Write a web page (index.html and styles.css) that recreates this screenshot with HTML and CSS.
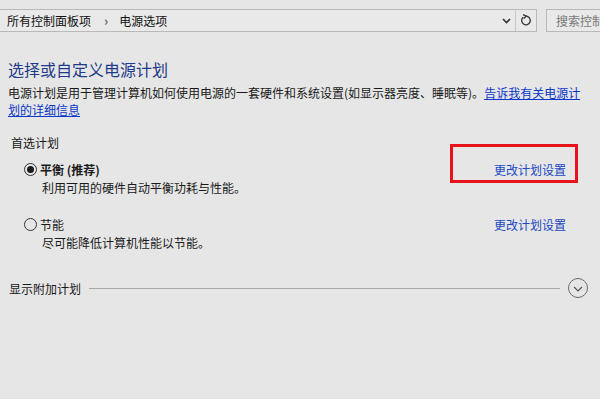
FILE: index.html
```html
<!DOCTYPE html>
<html lang="zh-CN">
<head>
    <meta charset="UTF-8">
    <title>电源选项</title>
    <link rel="stylesheet" href="styles.css">
</head>
<body>
    <div class="toolbar">
        <div class="address">
            <span class="crumb">所有控制面板项</span>
            <span class="sep">›</span>
            <span class="crumb">电源选项</span>
            <span class="spacer"></span>
            <span class="drop">
                <svg width="9" height="6" viewBox="0 0 9 6"><path d="M1 1 L4.5 4.5 L8 1" fill="none" stroke="#333" stroke-width="1.6"/></svg>
            </span>
            <span class="refresh">
                <svg width="12" height="13" viewBox="0 0 12 13"><path d="M3.2 3.2 A4.3 4.3 0 1 0 6 2.2" fill="none" stroke="#333" stroke-width="1.3"/><path d="M3 0.6 L6.4 2.2 L3.6 4.6" fill="none" stroke="#333" stroke-width="1.3"/></svg>
            </span>
        </div>
        <div class="search">搜索控制面板</div>
    </div>

    <div class="content">
        <h1 class="title">选择或自定义电源计划</h1>
        <p class="intro">电源计划是用于管理计算机如何使用电源的一套硬件和系统设置(如显示器亮度、睡眠等)。<a href="#" class="link">告诉我有关电源计划的详细信息</a></p>

        <div class="group-title">首选计划</div>

        <div class="plan">
            <div class="plan-head">
                <span class="radio checked"></span>
                <span class="plan-name bold">平衡 (推荐)</span>
                <a href="#" class="plan-link">更改计划设置</a>
                <span class="highlight"></span>
            </div>
            <div class="plan-desc">利用可用的硬件自动平衡功耗与性能。</div>
        </div>

        <div class="plan">
            <div class="plan-head">
                <span class="radio"></span>
                <span class="plan-name">节能</span>
                <a href="#" class="plan-link">更改计划设置</a>
            </div>
            <div class="plan-desc">尽可能降低计算机性能以节能。</div>
        </div>

        <div class="more">
            <span>显示附加计划</span>
            <span class="rule"></span>
            <span class="expand">
                <svg width="10" height="6" viewBox="0 0 10 6"><path d="M1 1 L5 5 L9 1" fill="none" stroke="#555" stroke-width="1.2"/></svg>
            </span>
        </div>
    </div>
</body>
</html>
```

FILE: styles.css
```css
* {
    font-family: "Noto Sans CJK SC", "Liberation Sans", sans-serif;
    box-sizing: border-box;
}

body {
    margin: 0;
    background-color: #e6e6e6;
    color: #1a1a1a;
    font-size: 12px;
    overflow: hidden;
}

.toolbar {
    display: flex;
    gap: 9px;
    padding-top: 9px;
    height: 32px;
}

.address {
    flex: 1;
    margin-left: -1px;
    display: flex;
    align-items: center;
    border: 1px solid #b9b9b9;
    background: #e9e9e9;
    height: 23px;
    padding-left: 7px;
    font-size: 12px;
}

.crumb {
    color: #111;
    line-height: 21px;
}

.sep {
    color: #666;
    font-size: 13px;
    font-weight: bold;
    margin: 0 11px 0 13px;
}

.spacer {
    flex: 1;
}

.drop {
    width: 18px;
    display: flex;
    justify-content: center;
    align-items: center;
    height: 100%;
}

.refresh {
    width: 21px;
    height: 100%;
    border-left: 1px solid #c8c8c8;
    display: flex;
    justify-content: center;
    align-items: center;
}

.search {
    width: 62px;
    height: 23px;
    margin-right: -8px;
    border: 1px solid #b9b9b9;
    border-right: none;
    background: #e9e9e9;
    color: #777;
    font-size: 12px;
    line-height: 21px;
    padding-left: 9px;
    white-space: nowrap;
    overflow: hidden;
}

.content {
    padding: 0 0 0 8px;
}

.title {
    margin: 26px 0 4px 0;
    font-size: 16px;
    line-height: 22px;
    font-weight: normal;
    color: #1e3a8a;
}

.intro {
    margin: 0;
    line-height: 17px;
    width: 576px;
}

.link {
    color: #0b37c9;
    text-decoration: underline;
}

.group-title {
    margin: 16px 0 0 3px;
    line-height: 18px;
}

.plan {
    margin: 7px 34px 0 16px;
}

.plan + .plan {
    margin-top: 18px;
}

.plan-head {
    position: relative;
    display: flex;
    align-items: center;
    height: 20px;
}

.radio {
    width: 13px;
    height: 13px;
    border: 1px solid #333;
    border-radius: 50%;
    margin-right: 3px;
    display: flex;
    justify-content: center;
    align-items: center;
}

.radio.checked::after {
    content: "";
    width: 7px;
    height: 7px;
    border-radius: 50%;
    background: #1a1a1a;
}

.plan-name.bold {
    font-weight: bold;
}

.plan-link {
    margin-left: auto;
    color: #1c48c2;
    text-decoration: none;
}

.highlight {
    position: absolute;
    left: 426px;
    top: -15px;
    width: 128px;
    height: 39px;
    border: 3px solid #e8131a;
}

.plan-desc {
    margin-left: 18px;
    line-height: 17px;
}

.more {
    display: flex;
    align-items: center;
    gap: 8px;
    margin: 27px 12px 0 1px;
}

.rule {
    flex: 1;
    height: 1px;
    background: #a8a8a8;
}

.expand {
    width: 20px;
    height: 20px;
    border: 1px solid #6a6a6a;
    border-radius: 50%;
    display: flex;
    justify-content: center;
    align-items: center;
    padding-top: 1px;
}
```
